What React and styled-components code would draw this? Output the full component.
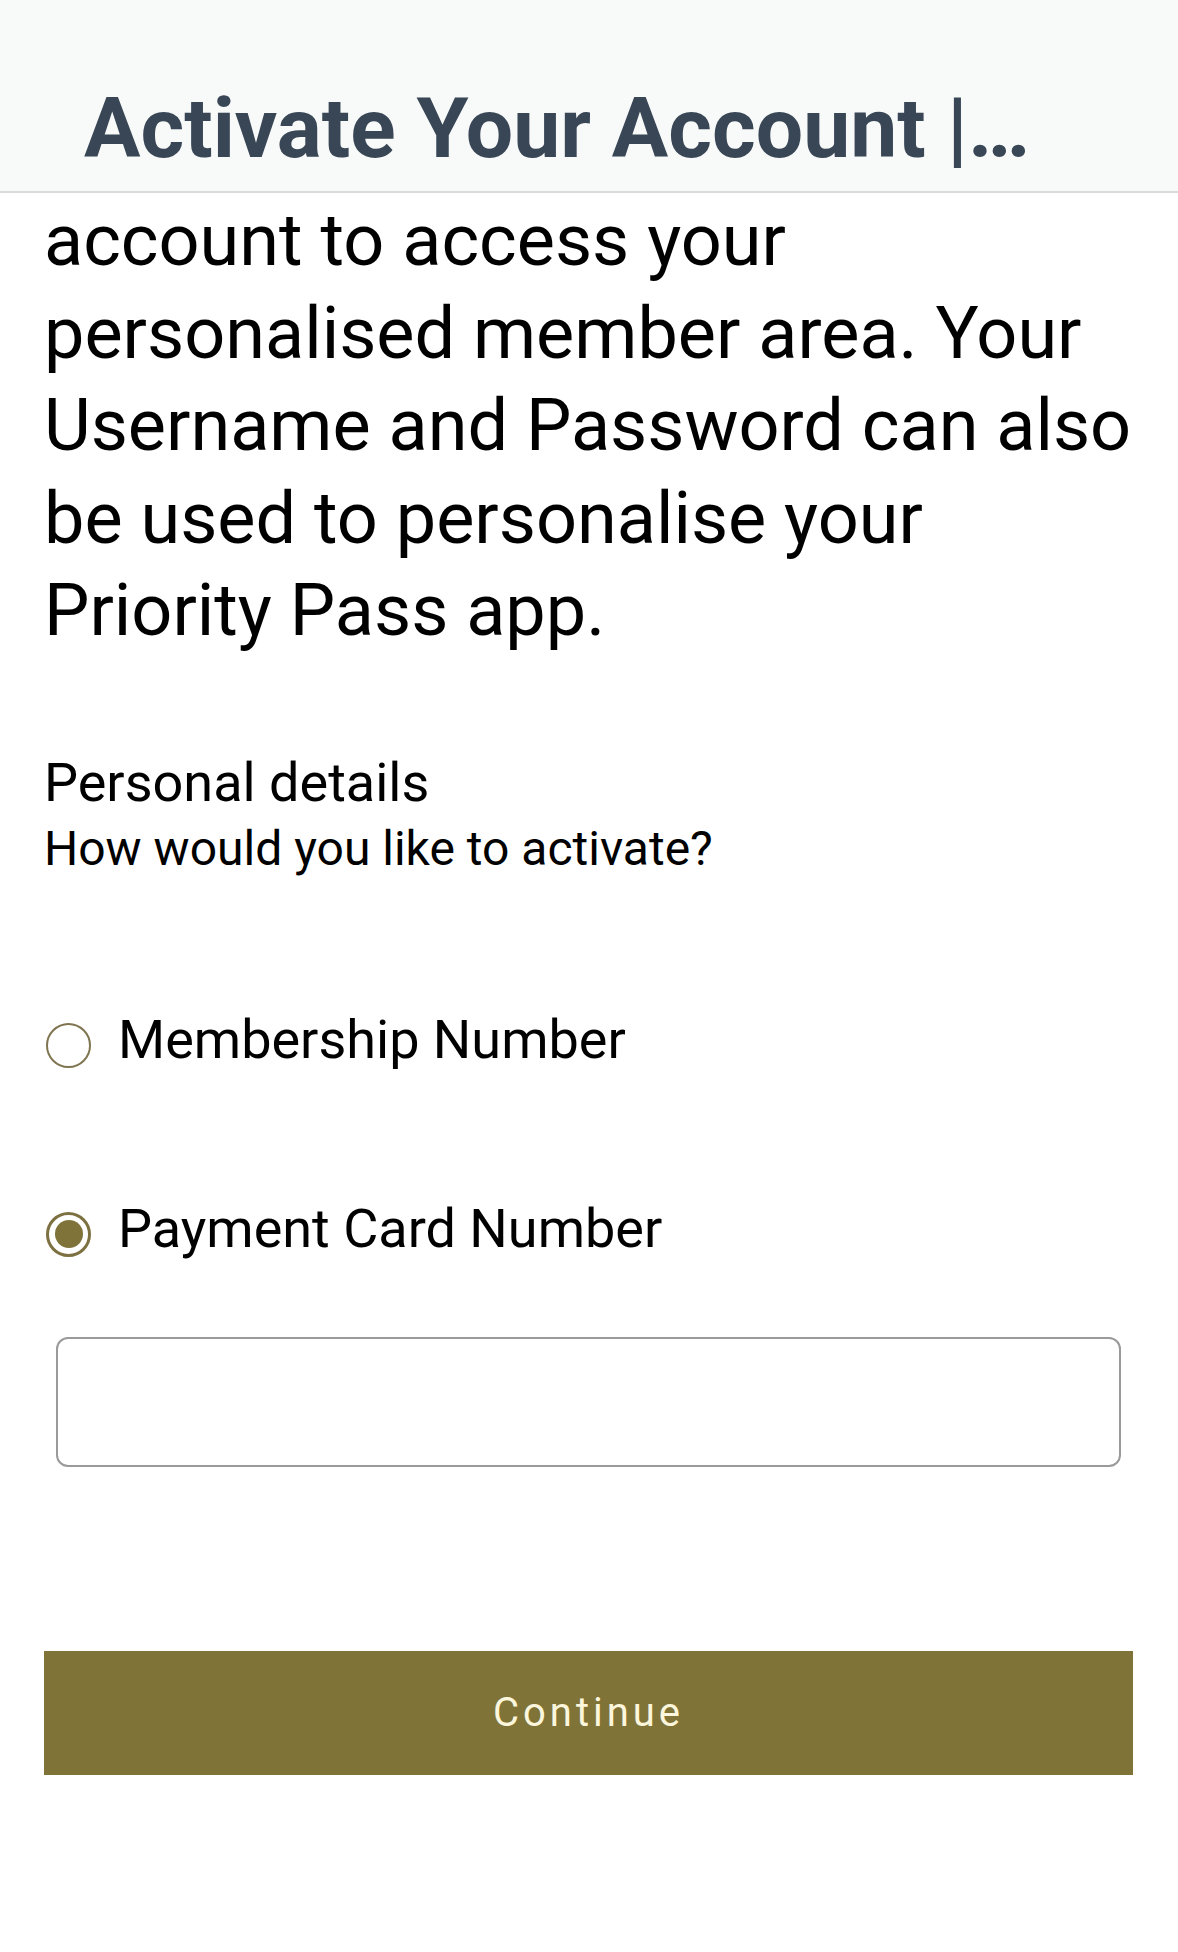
import React, { useState } from 'react'
import styled, { createGlobalStyle } from 'styled-components'

const GlobalStyle = createGlobalStyle`
  html, body {
    margin: 0;
    padding: 0;
    background: #ffffff;
  }
  body {
    font-family: Roboto, "Liberation Sans", Arial, sans-serif;
    color: #000000;
  }
`

const Page = styled.div`
  width: 1178px;
  min-height: 1952px;
  background: #ffffff;
`

const Header = styled.header`
  box-sizing: border-box;
  height: 193px;
  padding: 79px 0 0 84px;
  background: #f8f9f9;
  border-bottom: 2px solid #dadada;
`

const HeaderTitle = styled.h1`
  margin: 0;
  font-size: 84px;
  line-height: 100px;
  font-weight: 700;
  color: #384655;
  white-space: nowrap;
`

const Content = styled.main`
  padding: 2px 45px 0 44px;
  display: flex;
  flex-direction: column;
`

const Intro = styled.p`
  margin: 0;
  font-size: 72px;
  line-height: 92.5px;
  white-space: nowrap;
`

const SectionTitle = styled.h2`
  margin: 93px 0 0;
  font-size: 54px;
  line-height: 64px;
  font-weight: 400;
`

const Question = styled.p`
  margin: 4px 0 0;
  font-size: 48px;
  line-height: 60px;
`

const Options = styled.div`
  margin-top: 129px;
  display: flex;
  flex-direction: column;
  gap: 125px;
`

const Option = styled.label`
  display: flex;
  align-items: flex-start;
  gap: 27px;
  cursor: pointer;
  padding-left: 2px;
`

const Radio = styled.span`
  box-sizing: border-box;
  flex: none;
  width: 45px;
  height: 45px;
  margin-top: 15px;
  border-radius: 50%;
  border: ${p => (p.$checked ? '3px solid #7d7141' : '2.5px solid #7f7550')};
  display: flex;
  align-items: center;
  justify-content: center;

  &::after {
    content: '';
    display: ${p => (p.$checked ? 'block' : 'none')};
    width: 28px;
    height: 28px;
    border-radius: 50%;
    background: #7f7339;
  }
`

const OptionLabel = styled.span`
  font-size: 54px;
  line-height: 64px;
`

const CardInput = styled.input`
  box-sizing: border-box;
  margin: 76px 12px 0 12px;
  height: 130px;
  border: 2.5px solid #9a9a9a;
  border-radius: 12px;
  background: #ffffff;
  font-family: inherit;
  font-size: 48px;
  padding: 0 28px;
  outline: none;
`

const ContinueButton = styled.button`
  margin-top: 184px;
  height: 124px;
  width: 100%;
  border: none;
  border-radius: 0;
  background: #807338;
  color: #fbf6dc;
  font-family: Roboto, "Liberation Sans", Arial, sans-serif;
  font-size: 40px;
  letter-spacing: 4px;
  cursor: pointer;
`

const options = ['Membership Number', 'Payment Card Number']

export default function App() {
  const [selected, setSelected] = useState(1)

  return (
    <>
      <GlobalStyle />
      <Page>
        <Header>
          <HeaderTitle>Activate Your Account |…</HeaderTitle>
        </Header>
        <Content>
          <Intro>
            account to access your
            <br />
            personalised member area. Your
            <br />
            Username and Password can also
            <br />
            be used to personalise your
            <br />
            Priority Pass app.
          </Intro>
          <SectionTitle>Personal details</SectionTitle>
          <Question>How would you like to activate?</Question>
          <Options>
            {options.map((opt, i) => (
              <Option key={opt} onClick={() => setSelected(i)}>
                <Radio $checked={selected === i} />
                <OptionLabel>{opt}</OptionLabel>
              </Option>
            ))}
          </Options>
          <CardInput type="text" aria-label="Payment Card Number" />
          <ContinueButton>Continue</ContinueButton>
        </Content>
      </Page>
    </>
  )
}
